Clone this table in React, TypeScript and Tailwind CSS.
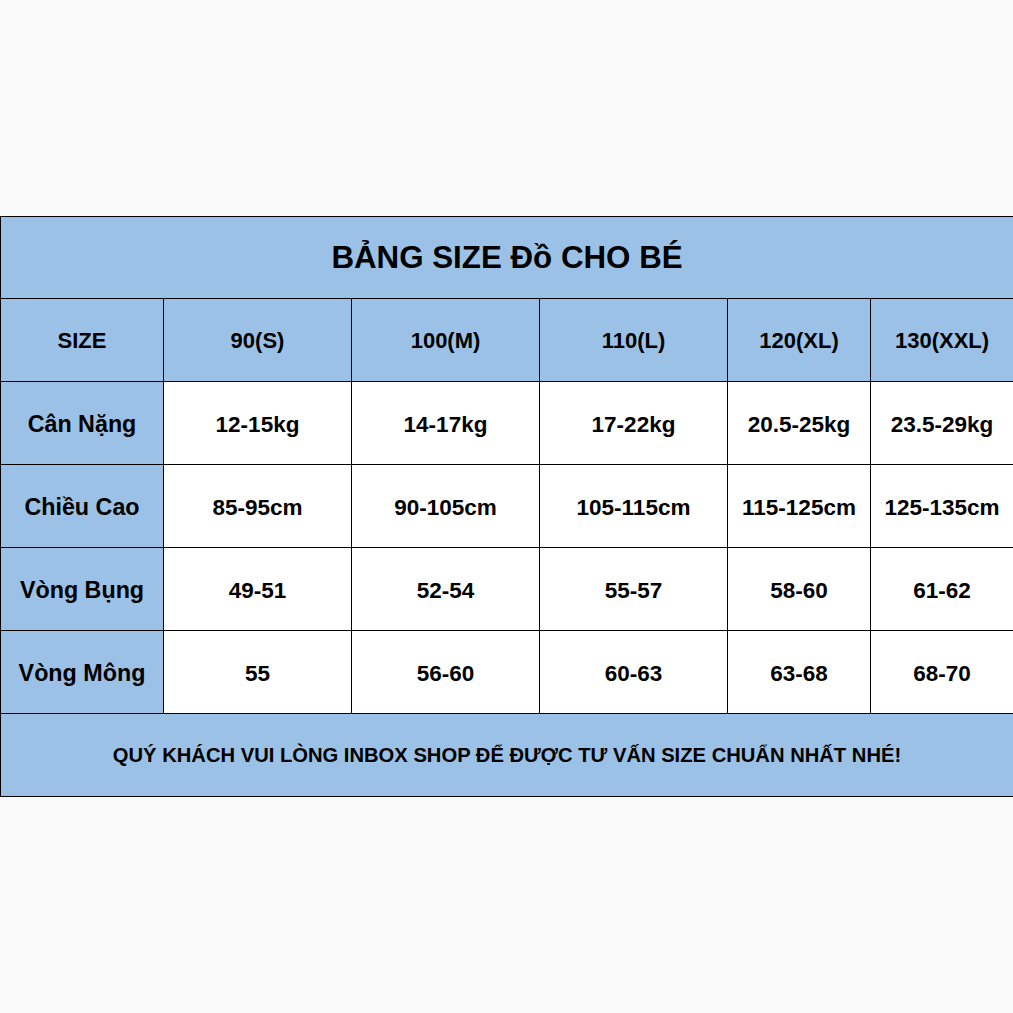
const columns = ["SIZE", "90(S)", "100(M)", "110(L)", "120(XL)", "130(XXL)"];

const rows = [
  ["Cân Nặng", "12-15kg", "14-17kg", "17-22kg", "20.5-25kg", "23.5-29kg"],
  ["Chiều Cao", "85-95cm", "90-105cm", "105-115cm", "115-125cm", "125-135cm"],
  ["Vòng Bụng", "49-51", "52-54", "55-57", "58-60", "61-62"],
  ["Vòng Mông", "55", "56-60", "60-63", "63-68", "68-70"],
];

const gridCols = "grid grid-cols-[163px_188px_188px_188px_143px_142px]";

export default function App() {
  return (
    <div
      className="w-[1013px] h-[1013px] bg-[#fafafa] pt-[216px] overflow-hidden text-black"
      style={{ fontFamily: '"Liberation Sans", Arial, sans-serif' }}
    >
      <div className="border-l border-t border-black w-[1013px]">
        {/* Title */}
        <div className="h-[82px] bg-[#9bc2e6] border-b border-black flex items-center justify-center">
          <h1 className="text-[31.3px] font-bold leading-none">BẢNG SIZE Đồ CHO BÉ</h1>
        </div>

        {/* Header */}
        <div className={gridCols}>
          {columns.map((c, i) => (
            <div
              key={c}
              className={`h-[83px] bg-[#9bc2e6] border-b border-black flex items-center justify-center text-[22px] font-bold ${
                i < columns.length - 1 ? "border-r" : ""
              }`}
            >
              {c}
            </div>
          ))}
        </div>

        {/* Body */}
        {rows.map((r) => (
          <div key={r[0]} className={gridCols}>
            {r.map((v, i) => (
              <div
                key={i}
                className={`h-[83px] pt-[3px] border-b border-black flex items-center justify-center font-bold ${
                  i === 0 ? "bg-[#9bc2e6] text-[23.3px]" : "bg-white text-[22.5px]"
                } ${i < r.length - 1 ? "border-r" : ""}`}
              >
                {v}
              </div>
            ))}
          </div>
        ))}

        {/* Footer */}
        <div className="h-[83px] bg-[#9bc2e6] border-b border-black flex items-center justify-center">
          <p className="text-[20.2px] font-bold leading-none">
            QUÝ KHÁCH VUI LÒNG INBOX SHOP ĐỂ ĐƯỢC TƯ VẤN SIZE CHUẨN NHẤT NHÉ!
          </p>
        </div>
      </div>
    </div>
  );
}
